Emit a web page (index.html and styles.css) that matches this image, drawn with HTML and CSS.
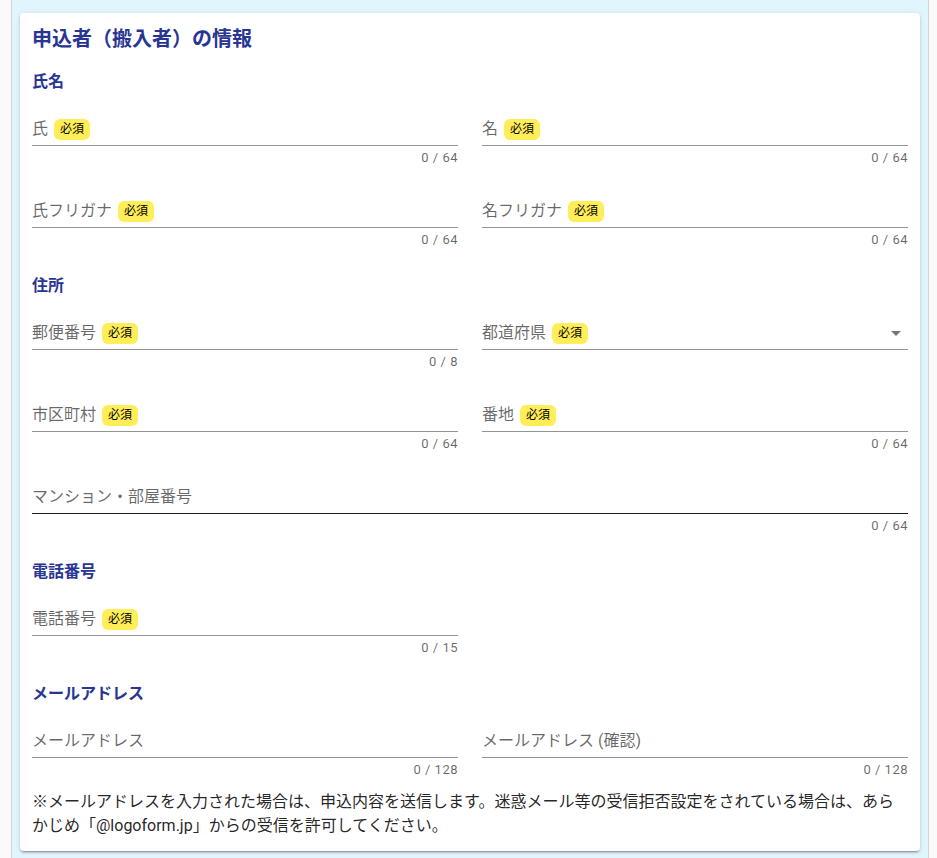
FILE: index.html
```html
<!DOCTYPE html>
<html lang="ja">
<head>
<meta charset="utf-8">
<title>申込者（搬入者）の情報</title>
<link rel="stylesheet" href="styles.css">
</head>
<body>
<div class="page">
  <div class="card">
    <h2 class="title">申込者（搬入者）の情報</h2>

    <section class="section">
      <h3 class="heading">氏名</h3>
      <div class="grid">
        <div class="field">
          <div class="control"><span class="label">氏</span><span class="badge">必須</span></div>
          <div class="details"><span class="counter">0 / 64</span></div>
        </div>
        <div class="field">
          <div class="control"><span class="label">名</span><span class="badge">必須</span></div>
          <div class="details"><span class="counter">0 / 64</span></div>
        </div>
        <div class="field">
          <div class="control"><span class="label">氏フリガナ</span><span class="badge">必須</span></div>
          <div class="details"><span class="counter">0 / 64</span></div>
        </div>
        <div class="field">
          <div class="control"><span class="label">名フリガナ</span><span class="badge">必須</span></div>
          <div class="details"><span class="counter">0 / 64</span></div>
        </div>
      </div>
    </section>

    <section class="section">
      <h3 class="heading">住所</h3>
      <div class="grid">
        <div class="field">
          <div class="control"><span class="label">郵便番号</span><span class="badge">必須</span></div>
          <div class="details"><span class="counter">0 / 8</span></div>
        </div>
        <div class="field">
          <div class="control"><span class="label">都道府県</span><span class="badge">必須</span>
            <svg class="arrow" viewBox="0 0 24 24" width="24" height="24"><path d="M7,10L12,15L17,10H7Z"/></svg>
          </div>
          <div class="details"></div>
        </div>
        <div class="field">
          <div class="control"><span class="label">市区町村</span><span class="badge">必須</span></div>
          <div class="details"><span class="counter">0 / 64</span></div>
        </div>
        <div class="field">
          <div class="control"><span class="label">番地</span><span class="badge">必須</span></div>
          <div class="details"><span class="counter">0 / 64</span></div>
        </div>
        <div class="field wide">
          <div class="control active"><span class="label">マンション・部屋番号</span></div>
          <div class="details"><span class="counter">0 / 64</span></div>
        </div>
      </div>
    </section>

    <section class="section">
      <h3 class="heading">電話番号</h3>
      <div class="grid">
        <div class="field">
          <div class="control"><span class="label">電話番号</span><span class="badge">必須</span></div>
          <div class="details"><span class="counter">0 / 15</span></div>
        </div>
      </div>
    </section>

    <section class="section">
      <h3 class="heading">メールアドレス</h3>
      <div class="grid">
        <div class="field">
          <div class="control"><span class="label">メールアドレス</span></div>
          <div class="details"><span class="counter">0 / 128</span></div>
        </div>
        <div class="field">
          <div class="control"><span class="label">メールアドレス (確認)</span></div>
          <div class="details"><span class="counter">0 / 128</span></div>
        </div>
      </div>
    </section>

    <p class="note">※メールアドレスを入力された場合は、申込内容を送信します。迷惑メール等の受信拒否設定をされている場合は、あらかじめ「@logoform.jp」からの受信を許可してください。</p>
  </div>
</div>
</body>
</html>
```

FILE: styles.css
```css
html, body {
  margin: 0;
  padding: 0;
}

body {
  background: #fafafa;
  font-family: Roboto, "Noto Sans CJK JP", "Noto Sans", sans-serif;
  color: rgba(0, 0, 0, 0.87);
}

.page {
  margin: 0 8px 0 11px;
  min-height: 100vh;
  background: #e1f5fe;
  border-left: 1px solid #d4d4d4;
  border-right: 1px solid #d4d4d4;
  padding: 13px 8px 0 8px;
  box-sizing: border-box;
}

.card {
  background: #fff;
  border-radius: 4px;
  box-shadow: 0 3px 1px -2px rgba(0, 0, 0, 0.2), 0 2px 2px 0 rgba(0, 0, 0, 0.14), 0 1px 5px 0 rgba(0, 0, 0, 0.12);
  padding: 10px 12px 13px 12px;
}

.title {
  margin: 0;
  font-size: 20px;
  line-height: 32px;
  font-weight: 700;
  color: #283593;
}

.section {
  margin-top: 27px;
}

.section:first-of-type {
  margin-top: 15px;
}

.heading {
  margin: 0 0 19px 0;
  font-size: 16px;
  line-height: 24px;
  font-weight: 700;
  color: #283593;
}

.grid {
  display: grid;
  grid-template-columns: 1fr 1fr;
  column-gap: 24px;
  row-gap: 30px;
}

.field.wide {
  grid-column: 1 / -1;
}

.control {
  display: flex;
  align-items: center;
  height: 32px;
  border-bottom: 1px solid rgba(0, 0, 0, 0.42);
}

.control.active {
  border-bottom-color: rgba(0, 0, 0, 0.87);
}

.label {
  font-size: 16px;
  line-height: 20px;
  color: rgba(0, 0, 0, 0.6);
}

.badge {
  margin-left: 6px;
  padding: 0 6px;
  height: 21px;
  line-height: 21px;
  font-size: 12px;
  color: #000;
  background: #ffee58;
  border-radius: 6px;
}

.arrow {
  margin-left: auto;
  fill: rgba(0, 0, 0, 0.54);
}

.details {
  padding-top: 5px;
  height: 14px;
  display: flex;
  justify-content: flex-end;
}

.counter {
  font-size: 13px;
  line-height: 14px;
  letter-spacing: 0.5px;
  color: rgba(0, 0, 0, 0.6);
}

.note {
  margin: 13px 0 0 0;
  font-size: 16px;
  line-height: 24px;
  color: rgba(0, 0, 0, 0.87);
}
```
